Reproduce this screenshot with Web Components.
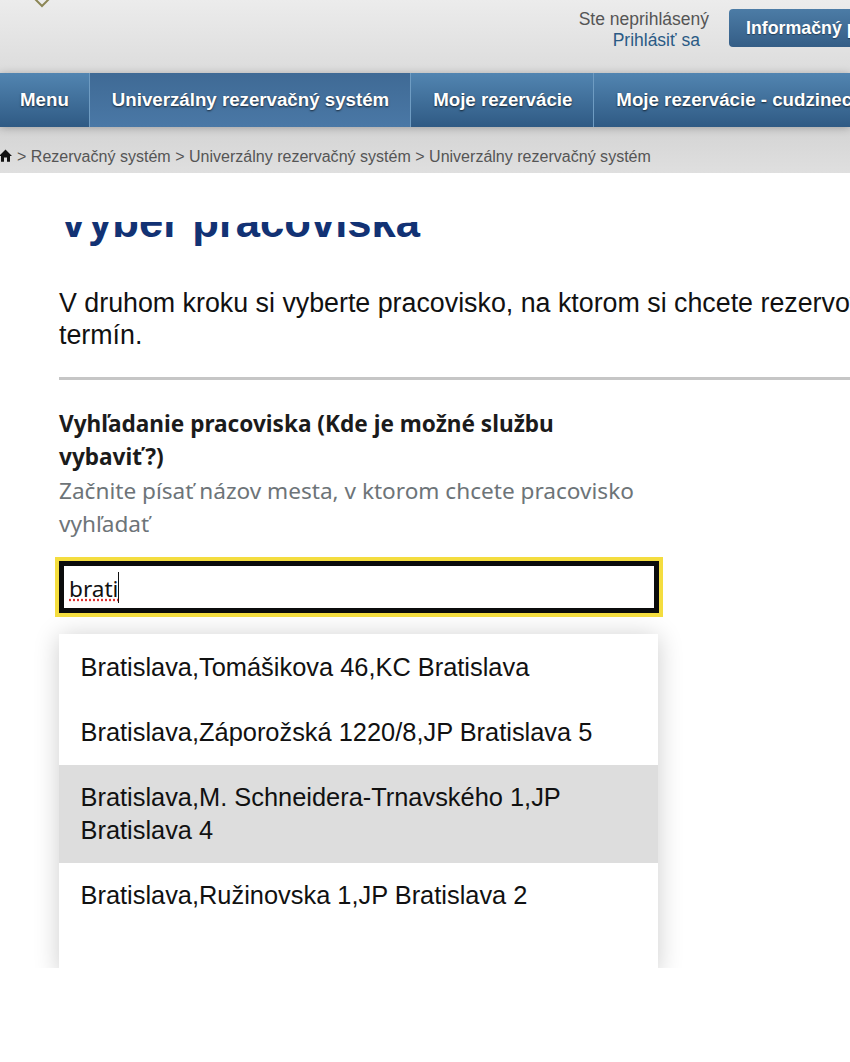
<!DOCTYPE html>
<html lang="sk">
<head>
<meta charset="utf-8">
<title>Výber pracoviska</title>
<style>
  html, body { margin: 0; background: #fff; }
  body { width: 850px; height: 1062px; overflow: hidden; font-family: "Liberation Sans", Arial, sans-serif; }
</style>
</head>
<body>
<rs-header></rs-header>
<rs-nav>
  <rs-nav-item first>Menu</rs-nav-item>
  <rs-nav-item active>Univerzálny rezervačný systém</rs-nav-item>
  <rs-nav-item>Moje rezervácie</rs-nav-item>
  <rs-nav-item>Moje rezervácie - cudzinec</rs-nav-item>
</rs-nav>
<rs-breadcrumb></rs-breadcrumb>
<rs-step title-text="Výber pracoviska">
  V druhom kroku si vyberte pracovisko, na ktorom si chcete rezervovať termín.
</rs-step>
<rs-search label="Vyhľadanie pracoviska (Kde je možné službu vybaviť?)" hint="Začnite písať názov mesta, v ktorom chcete pracovisko vyhľadať" value="brati">
  <rs-option>Bratislava,Tomášikova 46,KC Bratislava</rs-option>
  <rs-option>Bratislava,Záporožská 1220/8,JP Bratislava 5</rs-option>
  <rs-option active>Bratislava,M. Schneidera-Trnavského 1,JP Bratislava 4</rs-option>
  <rs-option>Bratislava,Ružinovska 1,JP Bratislava 2</rs-option>
</rs-search>

<script>
// Cabecera con logo recortado, estado de login y boton
class RsHeader extends HTMLElement {
  constructor() {
    super();
    this.attachShadow({ mode: 'open' });
  }
  connectedCallback() {
    this.shadowRoot.innerHTML = `
      <style>
        :host { display: flex; height: 73px; box-sizing: border-box; align-items: flex-start;
          background: linear-gradient(#ececec, #dcdcdc); overflow: hidden; }
        svg { flex: none; margin: -10px 0 0 32px; }
        .login { margin: 9px 0 0 auto; font-size: 17.5px; line-height: 21px; color: #555; white-space: nowrap; }
        .login a { display: block; margin-left: 34px; color: #2a5a85; text-decoration: none; }
        .btn { flex: none; box-sizing: border-box; width: 121px; height: 38px; margin: 9px 0 0 20px; padding: 0 0 0 17px;
          border-radius: 4px 0 0 4px; background: linear-gradient(#4c7ca6, #345d86); color: #fff;
          font-size: 17.8px; font-weight: bold; line-height: 38px; white-space: nowrap; overflow: hidden;
          text-shadow: 0 1px 1px rgba(0,0,0,.4); }
      </style>
      <svg width="20" height="18" viewBox="0 0 20 18"><path d="M3 9 L10 16 L17 9" fill="none" stroke="#8c8655" stroke-width="2"/></svg>
      <div class="login">Ste neprihlásený<a href="#">Prihlásiť sa</a></div>
      <div class="btn">Informačný portál</div>
    `;
  }
}
customElements.define('rs-header', RsHeader);

class RsNav extends HTMLElement {
  constructor() {
    super();
    this.attachShadow({ mode: 'open' });
    this.shadowRoot.innerHTML = `
      <style>
        :host { display: flex; height: 54px; overflow: hidden; white-space: nowrap;
          background: linear-gradient(#5285b1, #2f5a84); box-shadow: 0 1px 8px rgba(0,0,0,.25); position: relative; }
      </style>
      <slot></slot>
    `;
  }
}
customElements.define('rs-nav', RsNav);

class RsNavItem extends HTMLElement {
  constructor() {
    super();
    this.attachShadow({ mode: 'open' });
    this.shadowRoot.innerHTML = `
      <style>
        :host { display: block; flex: none; padding: 0 21px 0 22px; line-height: 54px; font-size: 18.7px; font-weight: bold;
          color: #fff; text-shadow: 0 1px 2px rgba(0,0,0,.7); border-right: 1px solid #6f9cc2; }
        :host([first]) { padding: 0 20px; }
        :host([active]) { padding: 0 21px 0 22px; background: linear-gradient(#3f6a95, #4a78a6); }
      </style>
      <slot></slot>
    `;
  }
}
customElements.define('rs-nav-item', RsNavItem);

class RsBreadcrumb extends HTMLElement {
  constructor() {
    super();
    this.attachShadow({ mode: 'open' });
    this.shadowRoot.innerHTML = `
      <style>
        :host { display: flex; align-items: center; height: 46px; padding-top: 12px; box-sizing: border-box;
          background: linear-gradient(#d4d4d4, #dfdfdf); font-size: 16.05px; color: #555; white-space: pre; }
        svg { flex: none; margin: -1px 5px 0 -1px; }
      </style>
      <svg width="13" height="13" viewBox="0 0 13 13"><path d="M6.5 .5 L13 7 H11 V12.8 H8 V8.5 H5 V12.8 H2 V7 H0 Z" fill="#111"/></svg>
      <span>&gt; Rezervačný systém &gt; Univerzálny rezervačný systém &gt; Univerzálny rezervačný systém</span>
    `;
  }
}
customElements.define('rs-breadcrumb', RsBreadcrumb);

// Titulo recortado por arriba, como en la captura
class RsStep extends HTMLElement {
  constructor() {
    super();
    this.attachShadow({ mode: 'open' });
  }
  connectedCallback() {
    this.shadowRoot.innerHTML = `
      <style>
        :host { display: block; padding-left: 59px; overflow: hidden; }
        .clip { height: 74px; padding-top: 49px; overflow: hidden; box-sizing: border-box; }
        .clip > div { height: 25px; overflow: hidden; display: flex; align-items: flex-end; }
        h1 { flex: none; margin: 0; font-size: 43.6px; line-height: 50px; font-weight: bold; color: #123274; white-space: nowrap; }
        p { margin: 40px 0 0; width: 835px; font-size: 26.8px; line-height: 32px; color: #111; }
        hr { margin: 26px 0 0; height: 3px; width: 100%; border: 0; background: #c6c6c6; }
      </style>
      <div class="clip"><div><h1>${this.getAttribute('title-text')}</h1></div></div>
      <p><slot></slot></p>
      <hr>
    `;
  }
}
customElements.define('rs-step', RsStep);

class RsSearch extends HTMLElement {
  constructor() {
    super();
    this.attachShadow({ mode: 'open' });
  }
  connectedCallback() {
    this.shadowRoot.innerHTML = `
      <style>
        :host { display: block; height: 588px; overflow: hidden; padding: 27px 0 0 59px; box-sizing: border-box;
          font-family: "Noto Sans", sans-serif; }
        .label { width: 590px; margin-bottom: 1px; font-size: 22.6px; line-height: 33px; font-weight: bold; color: #1b1b1b; }
        .hint { width: 590px; font-size: 22.6px; line-height: 33px; color: #6d7478; }
        .field { box-sizing: border-box; width: 600px; height: 52px; margin-top: 21px; border: 5px solid #0b0c0c;
          outline: 4px solid #f4dd3f; padding-left: 5px; font-size: 22.6px; line-height: 45px; color: #111; display: flex; }
        .value { height: 42px; text-decoration: underline dotted #d33; text-underline-offset: 2px; }
        .caret { width: 1px; height: 31px; margin: 6px 0 0 0; background: #111; }
        .list { width: 599px; height: 340px; margin-top: 21px; background: #fff; padding-top: 1px; box-sizing: border-box;
          box-shadow: 0 2px 24px rgba(0,0,0,.2); }
      </style>
      <div class="label">${this.getAttribute('label')}</div>
      <div class="hint">${this.getAttribute('hint')}</div>
      <div class="field"><span class="value">${this.getAttribute('value')}</span><span class="caret"></span></div>
      <div class="list"><slot></slot></div>
    `;
  }
}
customElements.define('rs-search', RsSearch);

class RsOption extends HTMLElement {
  constructor() {
    super();
    this.attachShadow({ mode: 'open' });
    this.shadowRoot.innerHTML = `
      <style>
        :host { display: block; padding: 16px 60px 16px 21.5px; font-family: "Liberation Sans", Arial, sans-serif;
          font-size: 25.4px; line-height: 33px; color: #111; }
        :host([active]) { background: #dddddd; }
      </style>
      <slot></slot>
    `;
  }
}
customElements.define('rs-option', RsOption);
</script>
</body>
</html>
